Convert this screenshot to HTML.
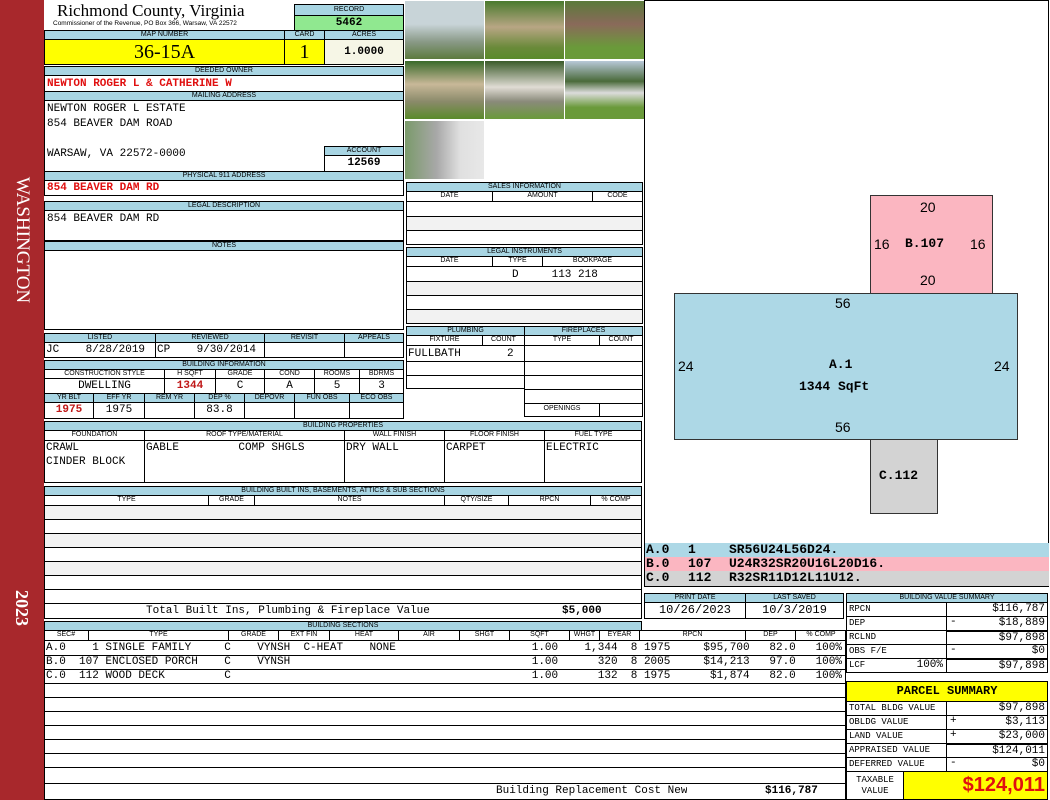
<!DOCTYPE html>
<html><head><meta charset="utf-8"><style>
*{margin:0;padding:0;box-sizing:border-box}
body{width:1050px;height:800px;position:relative;background:#fff;overflow:hidden;font-family:"Liberation Mono",monospace;font-size:11px;color:#000}
div{position:absolute}
.b{border:1px solid #000;background:#fff}
.l{background:#a8d5e3;border:1px solid #000;font:7px "Liberation Sans",sans-serif;text-align:center;line-height:8px;white-space:nowrap;overflow:hidden}
.v{font-family:"Liberation Mono",monospace;font-size:11px;line-height:14px;white-space:pre;overflow:hidden}
.r{color:#e01010;font-weight:bold}
.c{text-align:center}
.rt{text-align:right}
.hl{height:0;border-top:1px solid #000}
.vl{width:0;border-left:1px solid #000}
.alt{background:#f2f2f2}
.lg{font:bold 13px "Liberation Mono",monospace;line-height:14px}
</style></head><body>
<!-- sidebar -->
<div style="left:0;top:0;width:44px;height:800px;background:#a8282c"></div>
<div style="left:-78px;top:228px;width:200px;height:24px;transform:rotate(90deg);color:#fff;font:19px 'Liberation Serif',serif;text-align:center;line-height:24px">WASHINGTON</div>
<div style="left:2px;top:596px;width:40px;height:24px;transform:rotate(90deg);color:#fff;font:bold 18px 'Liberation Serif',serif;text-align:center;line-height:24px">2023</div>

<!-- header -->
<div style="left:57px;top:1px;font:17px 'Liberation Serif',serif;line-height:19px">Richmond County, Virginia</div>
<div style="left:53px;top:20px;font:6.5px 'Liberation Sans',sans-serif;line-height:8px">Commissioner of the Revenue, PO Box 366, Warsaw, VA 22572</div>
<div class="l" style="left:294px;top:4px;width:110px;height:12px;line-height:10px">RECORD</div>
<div class="v c" style="left:294px;top:15px;width:110px;height:16px;background:#90e890;border:1px solid #000;font-weight:bold">5462</div>
<div class="l" style="left:44px;top:30px;width:241px;height:10px">MAP NUMBER</div>
<div class="l" style="left:284px;top:30px;width:41px;height:10px">CARD</div>
<div class="l" style="left:324px;top:30px;width:80px;height:10px">ACRES</div>
<div class="b c" style="left:44px;top:39px;width:241px;height:26px;background:#ffff00;font:20px 'Liberation Serif',serif;line-height:24px">36-15A</div>
<div class="b c" style="left:284px;top:39px;width:41px;height:26px;background:#ffff00;font:20px 'Liberation Serif',serif;line-height:24px">1</div>
<div class="b c v" style="left:324px;top:39px;width:80px;height:26px;background:#f6f6e6;font-weight:bold;line-height:24px">1.0000</div>
<div class="l" style="left:44px;top:66px;width:360px;height:10px">DEEDED OWNER</div>
<div class="b" style="left:44px;top:75px;width:360px;height:17px"></div>
<div class="v r" style="left:47px;top:77px">NEWTON ROGER L &amp; CATHERINE W</div>
<div class="l" style="left:44px;top:91px;width:360px;height:10px">MAILING ADDRESS</div>
<div class="b" style="left:44px;top:100px;width:360px;height:72px"></div>
<div class="v" style="left:47px;top:102px;line-height:15px">NEWTON ROGER L ESTATE
854 BEAVER DAM ROAD</div>
<div class="v" style="left:47px;top:147px">WARSAW, VA 22572-0000</div>
<div class="l" style="left:324px;top:146px;width:80px;height:10px">ACCOUNT</div>
<div class="b v c" style="left:324px;top:155px;width:80px;height:17px;font-weight:bold">12569</div>
<div class="l" style="left:44px;top:171px;width:360px;height:10px">PHYSICAL 911 ADDRESS</div>
<div class="b" style="left:44px;top:180px;width:360px;height:16px"></div>
<div class="v r" style="left:47px;top:181px">854 BEAVER DAM RD</div>
<div class="l" style="left:44px;top:201px;width:360px;height:10px">LEGAL DESCRIPTION</div>
<div class="b" style="left:44px;top:210px;width:360px;height:31px"></div>
<div class="v" style="left:47px;top:212px">854 BEAVER DAM RD</div>
<div class="l" style="left:44px;top:241px;width:360px;height:10px">NOTES</div>
<div class="b" style="left:44px;top:250px;width:360px;height:80px"></div>

<!-- listed -->
<div class="l" style="left:44px;top:333px;width:112px;height:10px">LISTED</div>
<div class="l" style="left:155px;top:333px;width:110px;height:10px">REVIEWED</div>
<div class="l" style="left:264px;top:333px;width:81px;height:10px">REVISIT</div>
<div class="l" style="left:344px;top:333px;width:60px;height:10px">APPEALS</div>
<div class="b" style="left:44px;top:342px;width:112px;height:16px"></div>
<div class="b" style="left:155px;top:342px;width:110px;height:16px"></div>
<div class="b" style="left:264px;top:342px;width:81px;height:16px"></div>
<div class="b" style="left:344px;top:342px;width:60px;height:16px"></div>
<div class="v" style="left:46px;top:343px">JC    8/28/2019</div>
<div class="v" style="left:157px;top:343px">CP    9/30/2014</div>

<!-- building info -->
<div class="l" style="left:44px;top:360px;width:360px;height:10px">BUILDING INFORMATION</div>
<div class="l" style="left:44px;top:369px;width:121px;height:10px;background:#fff">CONSTRUCTION STYLE</div>
<div class="l" style="left:164px;top:369px;width:52px;height:10px;background:#fff">H SQFT</div>
<div class="l" style="left:215px;top:369px;width:50px;height:10px;background:#fff">GRADE</div>
<div class="l" style="left:264px;top:369px;width:51px;height:10px;background:#fff">COND</div>
<div class="l" style="left:314px;top:369px;width:46px;height:10px;background:#fff">ROOMS</div>
<div class="l" style="left:359px;top:369px;width:45px;height:10px;background:#fff">BDRMS</div>
<div class="b v c" style="left:44px;top:378px;width:121px;height:16px">DWELLING</div>
<div class="b v c r" style="left:164px;top:378px;width:52px;height:16px;color:#c01818">1344</div>
<div class="b v c" style="left:215px;top:378px;width:50px;height:16px">C</div>
<div class="b v c" style="left:264px;top:378px;width:51px;height:16px">A</div>
<div class="b v c" style="left:314px;top:378px;width:46px;height:16px">5</div>
<div class="b v c" style="left:359px;top:378px;width:45px;height:16px">3</div>
<div class="l" style="left:44px;top:393px;width:50px;height:10px">YR BLT</div>
<div class="l" style="left:93px;top:393px;width:52px;height:10px">EFF YR</div>
<div class="l" style="left:144px;top:393px;width:51px;height:10px">REM YR</div>
<div class="l" style="left:194px;top:393px;width:51px;height:10px">DEP %</div>
<div class="l" style="left:244px;top:393px;width:51px;height:10px">DEPOVR</div>
<div class="l" style="left:294px;top:393px;width:56px;height:10px">FUN OBS</div>
<div class="l" style="left:349px;top:393px;width:55px;height:10px">ECO OBS</div>
<div class="b v c r" style="left:44px;top:402px;width:50px;height:17px;color:#c01818">1975</div>
<div class="b v c" style="left:93px;top:402px;width:52px;height:17px">1975</div>
<div class="b" style="left:144px;top:402px;width:51px;height:17px"></div>
<div class="b v c" style="left:194px;top:402px;width:51px;height:17px">83.8</div>
<div class="b" style="left:244px;top:402px;width:51px;height:17px"></div>
<div class="b" style="left:294px;top:402px;width:56px;height:17px"></div>
<div class="b" style="left:349px;top:402px;width:55px;height:17px"></div>

<!-- building properties -->
<div class="l" style="left:44px;top:421px;width:598px;height:10px">BUILDING PROPERTIES</div>
<div class="b" style="left:44px;top:430px;width:598px;height:53px"></div>
<div class="hl" style="left:44px;top:440px;width:598px"></div>
<div class="vl" style="left:144px;top:430px;height:53px"></div>
<div class="vl" style="left:344px;top:430px;height:53px"></div>
<div class="vl" style="left:444px;top:430px;height:53px"></div>
<div class="vl" style="left:544px;top:430px;height:53px"></div>
<div class="l" style="left:45px;top:431px;width:99px;height:9px;border:0;background:none">FOUNDATION</div>
<div class="l" style="left:145px;top:431px;width:199px;height:9px;border:0;background:none">ROOF TYPE/MATERIAL</div>
<div class="l" style="left:345px;top:431px;width:99px;height:9px;border:0;background:none">WALL FINISH</div>
<div class="l" style="left:445px;top:431px;width:99px;height:9px;border:0;background:none">FLOOR FINISH</div>
<div class="l" style="left:545px;top:431px;width:97px;height:9px;border:0;background:none">FUEL TYPE</div>
<div class="v" style="left:46px;top:441px">CRAWL
CINDER BLOCK</div>
<div class="v" style="left:146px;top:441px">GABLE         COMP SHGLS</div>
<div class="v" style="left:346px;top:441px">DRY WALL</div>
<div class="v" style="left:446px;top:441px">CARPET</div>
<div class="v" style="left:546px;top:441px">ELECTRIC</div>

<!-- built ins -->
<div class="l" style="left:44px;top:486px;width:598px;height:10px">BUILDING BUILT INS, BASEMENTS, ATTICS &amp; SUB SECTIONS</div>
<div class="b" style="left:44px;top:495px;width:598px;height:124px"></div>
<div class="l" style="left:44px;top:495px;width:165px;height:11px;background:none">TYPE</div>
<div class="l" style="left:208px;top:495px;width:47px;height:11px;background:none">GRADE</div>
<div class="l" style="left:254px;top:495px;width:191px;height:11px;background:none">NOTES</div>
<div class="l" style="left:444px;top:495px;width:65px;height:11px;background:none">QTY/SIZE</div>
<div class="l" style="left:508px;top:495px;width:83px;height:11px;background:none">RPCN</div>
<div class="l" style="left:590px;top:495px;width:52px;height:11px;background:none">% COMP</div>
<div class="alt" style="left:45px;top:506px;width:596px;height:13px"></div>
<div class="hl" style="left:44px;top:519px;width:598px"></div>
<div class="hl" style="left:44px;top:533px;width:598px"></div>
<div class="alt" style="left:45px;top:534px;width:596px;height:13px"></div>
<div class="hl" style="left:44px;top:547px;width:598px"></div>
<div class="hl" style="left:44px;top:561px;width:598px"></div>
<div class="alt" style="left:45px;top:562px;width:596px;height:13px"></div>
<div class="hl" style="left:44px;top:575px;width:598px"></div>
<div class="hl" style="left:44px;top:589px;width:598px"></div>
<div class="hl" style="left:44px;top:603px;width:598px"></div>
<div class="v" style="left:146px;top:604px">Total Built Ins, Plumbing &amp; Fireplace Value</div>
<div class="v" style="left:562px;top:604px;font-weight:bold">$5,000</div>

<!-- building sections -->
<div class="l" style="left:44px;top:621px;width:598px;height:10px">BUILDING SECTIONS</div>
<div class="b" style="left:44px;top:630px;width:802px;height:170px"></div>
<div class="l" style="left:44px;top:630px;width:802px;height:11px;background:none;border-left:0;border-right:0"></div>
<div style="left:44px;top:630px;width:802px;height:11px;font:7px 'Liberation Sans',sans-serif;line-height:10px">
<div class="c" style="left:0;width:45px;border-right:1px solid #000;height:10px">SEC#</div>
<div class="c" style="left:45px;width:140px;border-right:1px solid #000;height:10px">TYPE</div>
<div class="c" style="left:185px;width:50px;border-right:1px solid #000;height:10px">GRADE</div>
<div class="c" style="left:235px;width:51px;border-right:1px solid #000;height:10px">EXT FIN</div>
<div class="c" style="left:286px;width:69px;border-right:1px solid #000;height:10px">HEAT</div>
<div class="c" style="left:355px;width:61px;border-right:1px solid #000;height:10px">AIR</div>
<div class="c" style="left:416px;width:50px;border-right:1px solid #000;height:10px">SHGT</div>
<div class="c" style="left:466px;width:60px;border-right:1px solid #000;height:10px">SQFT</div>
<div class="c" style="left:526px;width:30px;border-right:1px solid #000;height:10px">WHGT</div>
<div class="c" style="left:556px;width:40px;border-right:1px solid #000;height:10px">EYEAR</div>
<div class="c" style="left:596px;width:106px;border-right:1px solid #000;height:10px">RPCN</div>
<div class="c" style="left:702px;width:50px;border-right:1px solid #000;height:10px">DEP</div>
<div class="c" style="left:752px;width:50px;height:10px">% COMP</div>
</div>
<div class="hl" style="left:44px;top:655px;width:802px"></div>
<div class="hl" style="left:44px;top:669px;width:802px"></div>
<div class="hl" style="left:44px;top:683px;width:802px"></div>
<div class="hl" style="left:44px;top:697px;width:802px"></div>
<div class="hl" style="left:44px;top:711px;width:802px"></div>
<div class="hl" style="left:44px;top:725px;width:802px"></div>
<div class="hl" style="left:44px;top:739px;width:802px"></div>
<div class="hl" style="left:44px;top:753px;width:802px"></div>
<div class="hl" style="left:44px;top:767px;width:802px"></div>
<div class="hl" style="left:44px;top:783px;width:802px"></div>
<div class="v" style="left:46px;top:641px">A.0    1 SINGLE FAMILY     C    VYNSH  C-HEAT    NONE</div>
<div class="v" style="left:46px;top:655px">B.0  107 ENCLOSED PORCH    C    VYNSH</div>
<div class="v" style="left:46px;top:669px">C.0  112 WOOD DECK         C</div>
<div class="v rt" style="left:460px;top:641px;width:382px">1.00    1,344  8 1975     $95,700   82.0   100%</div>
<div class="v rt" style="left:460px;top:655px;width:382px">1.00      320  8 2005     $14,213   97.0   100%</div>
<div class="v rt" style="left:460px;top:669px;width:382px">1.00      132  8 1975      $1,874   82.0   100%</div>
<div class="v" style="left:496px;top:784px">Building Replacement Cost New</div>
<div class="v" style="left:765px;top:784px;font-weight:bold">$116,787</div>

<!-- photos -->
<div style="left:404px;top:0;width:240px;height:180px;background:#fff"></div>
<div style="left:405px;top:1px;width:79px;height:58px;background:linear-gradient(#c8d4d8 40%,#8a9a88 70%,#5c7a3e)"></div>
<div style="left:485px;top:1px;width:79px;height:58px;background:linear-gradient(#4a7a2e,#b8a684 45%,#6a8a3a 80%,#5a8a2a)"></div>
<div style="left:565px;top:1px;width:79px;height:58px;background:linear-gradient(#5a7a3a,#8a6a5a 40%,#6a9a3a 80%)"></div>
<div style="left:405px;top:61px;width:79px;height:58px;background:linear-gradient(#3a6a2a,#c8b898 40%,#8a8a6a 70%,#5a8a2a)"></div>
<div style="left:485px;top:61px;width:79px;height:58px;background:linear-gradient(#3a5a2a,#e0dcd4 45%,#8a8a7a 70%,#6a9a3a)"></div>
<div style="left:565px;top:61px;width:79px;height:58px;background:linear-gradient(#b8c8d8,#4a6a3a 35%,#dcdcdc 55%,#6a9a3a 80%)"></div>
<div style="left:405px;top:121px;width:79px;height:58px;background:linear-gradient(90deg,#7a9a6a,#a8a8a8 40%,#e0e0e0 70%,#e8e8e8)"></div>

<!-- sales -->
<div class="l" style="left:406px;top:182px;width:237px;height:10px">SALES INFORMATION</div>
<div class="b" style="left:406px;top:191px;width:237px;height:54px"></div>
<div class="l" style="left:406px;top:191px;width:87px;height:11px;background:none">DATE</div>
<div class="l" style="left:492px;top:191px;width:101px;height:11px;background:none">AMOUNT</div>
<div class="l" style="left:592px;top:191px;width:51px;height:11px;background:none">CODE</div>
<div class="hl" style="left:406px;top:216px;width:237px"></div>
<div class="alt" style="left:407px;top:217px;width:235px;height:13px"></div>
<div class="hl" style="left:406px;top:230px;width:237px"></div>
<div class="l" style="left:406px;top:247px;width:237px;height:10px">LEGAL INSTRUMENTS</div>
<div class="b" style="left:406px;top:256px;width:237px;height:68px"></div>
<div class="l" style="left:406px;top:256px;width:87px;height:11px;background:none">DATE</div>
<div class="l" style="left:492px;top:256px;width:51px;height:11px;background:none">TYPE</div>
<div class="l" style="left:542px;top:256px;width:101px;height:11px;background:none">BOOKPAGE</div>
<div class="v" style="left:512px;top:268px">D     113 218</div>
<div class="hl" style="left:406px;top:281px;width:237px"></div>
<div class="alt" style="left:407px;top:282px;width:235px;height:13px"></div>
<div class="hl" style="left:406px;top:295px;width:237px"></div>
<div class="hl" style="left:406px;top:309px;width:237px"></div>
<div class="alt" style="left:407px;top:310px;width:235px;height:13px"></div>

<!-- plumbing -->
<div class="l" style="left:406px;top:326px;width:119px;height:10px">PLUMBING</div>
<div class="l" style="left:524px;top:326px;width:119px;height:10px">FIREPLACES</div>
<div class="b" style="left:406px;top:335px;width:119px;height:54px"></div>
<div class="b" style="left:524px;top:335px;width:119px;height:82px"></div>
<div class="l" style="left:406px;top:335px;width:77px;height:11px;background:none">FIXTURE</div>
<div class="l" style="left:482px;top:335px;width:43px;height:11px;background:none">COUNT</div>
<div class="l" style="left:524px;top:335px;width:76px;height:11px;background:none">TYPE</div>
<div class="l" style="left:599px;top:335px;width:44px;height:11px;background:none">COUNT</div>
<div class="v" style="left:408px;top:347px">FULLBATH       2</div>
<div class="hl" style="left:406px;top:361px;width:237px"></div>
<div class="hl" style="left:406px;top:375px;width:237px"></div>
<div class="hl" style="left:524px;top:389px;width:119px"></div>
<div class="hl" style="left:524px;top:403px;width:119px"></div>
<div class="vl" style="left:599px;top:403px;height:14px"></div>
<div class="l" style="left:525px;top:405px;width:74px;height:10px;border:0;background:none">OPENINGS</div>

<!-- sketch -->
<div class="b" style="left:644px;top:0;width:405px;height:545px"></div>
<div style="left:870px;top:195px;width:123px;height:99px;background:#fbb6c1;border:1px solid #333"></div>
<div style="left:674px;top:293px;width:344px;height:147px;background:#add8e6;border:1px solid #333"></div>
<div style="left:870px;top:439px;width:68px;height:75px;background:#d3d3d3;border:1px solid #333"></div>
<div style="left:920px;top:199px;font:14px 'Liberation Sans',sans-serif">20</div>
<div style="left:920px;top:272px;font:14px 'Liberation Sans',sans-serif">20</div>
<div style="left:874px;top:236px;font:14px 'Liberation Sans',sans-serif">16</div>
<div style="left:970px;top:236px;font:14px 'Liberation Sans',sans-serif">16</div>
<div style="left:905px;top:236px;font:bold 13px 'Liberation Mono',monospace">B.107</div>
<div style="left:835px;top:295px;font:14px 'Liberation Sans',sans-serif">56</div>
<div style="left:835px;top:419px;font:14px 'Liberation Sans',sans-serif">56</div>
<div style="left:678px;top:358px;font:14px 'Liberation Sans',sans-serif">24</div>
<div style="left:994px;top:358px;font:14px 'Liberation Sans',sans-serif">24</div>
<div style="left:829px;top:357px;font:bold 13px 'Liberation Mono',monospace">A.1</div>
<div style="left:799px;top:379px;font:bold 13px 'Liberation Mono',monospace">1344 SqFt</div>
<div style="left:879px;top:468px;font:bold 13px 'Liberation Mono',monospace">C.112</div>

<!-- legend -->
<div style="left:644px;top:543px;width:405px;height:14px;background:#add8e6;border-left:1px solid #000"></div>
<div style="left:644px;top:557px;width:405px;height:14px;background:#fbb6c1;border-left:1px solid #000"></div>
<div style="left:644px;top:571px;width:405px;height:15px;background:#d3d3d3;border-left:1px solid #000"></div>
<div class="lg" style="left:646px;top:543px">A.0</div><div class="lg" style="left:688px;top:543px">1</div><div class="lg" style="left:729px;top:543px">SR56U24L56D24.</div>
<div class="lg" style="left:646px;top:557px">B.0</div><div class="lg" style="left:688px;top:557px">107</div><div class="lg" style="left:729px;top:557px">U24R32SR20U16L20D16.</div>
<div class="lg" style="left:646px;top:571px">C.0</div><div class="lg" style="left:688px;top:571px">112</div><div class="lg" style="left:729px;top:571px">R32SR11D12L11U12.</div>
<div class="hl" style="left:644px;top:586px;width:405px"></div>

<!-- print date -->
<div class="l" style="left:644px;top:593px;width:102px;height:10px">PRINT DATE</div>
<div class="l" style="left:745px;top:593px;width:99px;height:10px">LAST SAVED</div>
<div class="b v c" style="left:644px;top:602px;width:102px;height:17px;font-size:12px">10/26/2023</div>
<div class="b v c" style="left:745px;top:602px;width:99px;height:17px;font-size:12px">10/3/2019</div>

<!-- building value summary -->
<div class="l" style="left:846px;top:593px;width:202px;height:10px">BUILDING VALUE SUMMARY</div>
<div style="left:846px;top:602px;width:202px;height:72px;font:9px 'Liberation Mono',monospace">
<div class="b" style="left:0;top:0;width:101px;height:15px;padding-left:2px;line-height:13px">RPCN</div>
<div class="b v rt" style="left:100px;top:0;width:102px;height:15px;padding-right:2px;line-height:13px">$116,787</div>
<div class="b" style="left:0;top:14px;width:101px;height:15px;padding-left:2px;line-height:13px">DEP</div>
<div class="b v rt" style="left:100px;top:14px;width:102px;height:15px;padding-right:2px;line-height:13px">$18,889</div>
<div class="v" style="left:104px;top:14px;line-height:13px">-</div>
<div class="b" style="left:0;top:28px;width:101px;height:15px;padding-left:2px;line-height:13px">RCLND</div>
<div class="b v rt" style="left:100px;top:28px;width:102px;height:15px;padding-right:2px;line-height:13px;border-top:2px solid #000">$97,898</div>
<div class="b" style="left:0;top:42px;width:101px;height:15px;padding-left:2px;line-height:13px">OBS F/E</div>
<div class="b v rt" style="left:100px;top:42px;width:102px;height:15px;padding-right:2px;line-height:13px">$0</div>
<div class="v" style="left:104px;top:42px;line-height:13px">-</div>
<div class="b" style="left:0;top:56px;width:101px;height:15px;padding-left:2px;line-height:13px">LCF<span style="position:absolute;right:3px;font-size:11px">100%</span></div>
<div class="b v rt" style="left:100px;top:56px;width:102px;height:15px;padding-right:2px;line-height:13px;border-top:2px solid #000">$97,898</div>
</div>

<!-- parcel summary -->
<div class="b c" style="left:846px;top:681px;width:202px;height:21px;background:#ffff00;font:bold 12px 'Liberation Mono',monospace;line-height:19px">PARCEL SUMMARY</div>
<div style="left:846px;top:701px;width:202px;height:99px;font:9px 'Liberation Mono',monospace">
<div class="b" style="left:0;top:0;width:101px;height:15px;padding-left:2px;line-height:13px">TOTAL BLDG VALUE</div>
<div class="b v rt" style="left:100px;top:0;width:102px;height:15px;padding-right:2px;line-height:13px">$97,898</div>
<div class="b" style="left:0;top:14px;width:101px;height:15px;padding-left:2px;line-height:13px">OBLDG VALUE</div>
<div class="b v rt" style="left:100px;top:14px;width:102px;height:15px;padding-right:2px;line-height:13px">$3,113</div>
<div class="v" style="left:104px;top:14px;line-height:13px">+</div>
<div class="b" style="left:0;top:28px;width:101px;height:15px;padding-left:2px;line-height:13px">LAND VALUE</div>
<div class="b v rt" style="left:100px;top:28px;width:102px;height:15px;padding-right:2px;line-height:13px">$23,000</div>
<div class="v" style="left:104px;top:28px;line-height:13px">+</div>
<div class="b" style="left:0;top:42px;width:101px;height:15px;padding-left:2px;line-height:13px">APPRAISED VALUE</div>
<div class="b v rt" style="left:100px;top:42px;width:102px;height:15px;padding-right:2px;line-height:13px;border-top:2px solid #000">$124,011</div>
<div class="b" style="left:0;top:56px;width:101px;height:15px;padding-left:2px;line-height:13px">DEFERRED VALUE</div>
<div class="b v rt" style="left:100px;top:56px;width:102px;height:15px;padding-right:2px;line-height:13px">$0</div>
<div class="v" style="left:104px;top:56px;line-height:13px">-</div>
<div class="b c" style="left:0;top:70px;width:58px;height:29px;line-height:11px;padding-top:3px">TAXABLE<br>VALUE</div>
<div class="b rt" style="left:57px;top:70px;width:145px;height:29px;background:#ffff00;color:#e01010;font:bold 20px 'Liberation Sans',sans-serif;line-height:27px;padding-right:2px">$124,011</div>
</div>
</body></html>
